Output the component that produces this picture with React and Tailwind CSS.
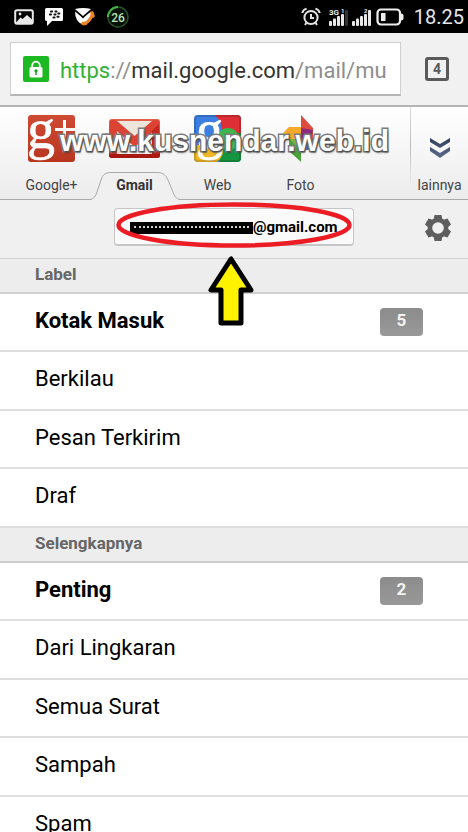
import clsx from "clsx";

const LABELS = [
    { name: "Kotak Masuk", unread: 5 },
    { name: "Berkilau" },
    { name: "Pesan Terkirim" },
    { name: "Draf" },
];

const MORE_LABELS = [
    { name: "Penting", unread: 2 },
    { name: "Dari Lingkaran" },
    { name: "Semua Surat" },
    { name: "Sampah" },
    { name: "Spam" },
];

function PictureIcon() {
    return (
        <svg viewBox="0 0 20 16" className="h-4 w-5">
            <rect x="1.2" y="1.2" width="17.6" height="13.6" rx="1.8" fill="none" stroke="#e8e8e8" strokeWidth="2" />
            <path d="M2 13.5 6.5 8.5 8.5 10 13 6 18 10.5V14H2z" fill="#e8e8e8" />
            <circle cx="6" cy="5" r="1.4" fill="#e8e8e8" />
        </svg>
    );
}

function MessengerIcon() {
    return (
        <svg viewBox="0 0 20 20" className="h-5 w-5">
            <path d="M2.5 1h15Q19 1 19 2.5v10q0 1.500-1.500 1.500H8l-5 5v-5Q1 14 1 12.500v-10Q1 1 2.500 1z" fill="#fff" />
            <g fill="#111">
                <rect x="6" y="3.500" width="3" height="2" rx=".8" />
                <rect x="10.500" y="3.500" width="3" height="2" rx=".8" />
                <rect x="5" y="6.500" width="3" height="2" rx=".8" />
                <rect x="9.500" y="6.500" width="3" height="2" rx=".8" />
                <rect x="13.300" y="5.500" width="3" height="2" rx=".8" />
                <rect x="8.500" y="9.500" width="3" height="2" rx=".8" />
                <rect x="12.500" y="8.800" width="3" height="2" rx=".8" />
            </g>
        </svg>
    );
}

function MailPhoneIcon() {
    return (
        <svg viewBox="0 0 22 20" className="h-5 w-[22px]">
            <path d="M1 2Q9 0 17 2L9 9z" fill="#fff" />
            <path d="M1 4.500 6.500 9 9 11.500 11.500 9 17 4.500V9l-6 7-2 1.500Q1 15 1 4.500z" fill="#fff" />
            <path d="M9 16.500Q15.500 16.500 18.500 7" fill="none" stroke="#ee8420" strokeWidth="2.800" />
            <path d="M9 16.500h2.500M18 6l1 3" stroke="#ee8420" strokeWidth="3.600" strokeLinecap="round" />
        </svg>
    );
}

function BatteryRing() {
    return (
        <svg viewBox="0 0 24 24" className="h-6 w-6">
            <circle cx="12" cy="12" r="10" fill="#081008" stroke="#245428" strokeWidth="1.500" />
            <path d="M2 12A10 10 0 0 1 12 2" fill="none" stroke="#44b244" strokeWidth="2" />
            <text x="12" y="16.500" textAnchor="middle" fontSize="12" fontWeight="500" fill="#b5e6b5" fontFamily="Roboto, sans-serif">
                26
            </text>
        </svg>
    );
}

function AlarmIcon() {
    return (
        <svg viewBox="0 0 20 20" className="h-5 w-5" fill="none" stroke="#e4e4e4" strokeWidth="2">
            <circle cx="10" cy="10.500" r="6.600" />
            <path d="M10 7v4h3M1.200 6Q2.200 2.600 5.600 1.600M18.800 6Q17.800 2.600 14.400 1.600M5.600 15.500 4 18M14.400 15.500 16 18" />
        </svg>
    );
}

function SignalIcon({ network, slot, strong }) {
    return (
        <svg viewBox="0 0 20 20" className="h-5 w-5">
            <g fill="#e8e8e8">
                <rect x="0" y="14" width="3" height="5" rx="1" />
                <rect x="4" y="11.500" width="3" height="7.500" rx="1" />
                <rect x="8" y="9" width="3" height="10" rx="1" />
                <rect x="12" y="7" width="3" height="12" rx="1" />
                <rect x="16" y="3" width="3" height="16" rx="1" fill={strong ? "#e8e8e8" : "#333"} />
            </g>
            <text x="0" y="8" fontSize="8" fontWeight="700" fill="#e8e8e8" fontFamily="Roboto, sans-serif">
                {network}
            </text>
            <text x="12" y="6" fontSize="6" fontWeight="700" fill="#e8e8e8" fontFamily="Roboto, sans-serif">
                {slot}
            </text>
        </svg>
    );
}

function BatteryIcon() {
    return (
        <svg viewBox="0 0 28 18" className="h-[18px] w-7">
            <rect x="1.500" y="1.500" width="22.500" height="15" rx="3.500" fill="none" stroke="#eee" strokeWidth="2.200" />
            <rect x="5" y="5" width="4.500" height="8" fill="#eee" />
            <path d="M25 5.500q2.500 0 2.500 2v3q0 2-2.500 2z" fill="#eee" />
        </svg>
    );
}

function LockBadge() {
    return (
        <svg viewBox="0 0 26 26" className="size-[26px] shrink-0">
            <rect width="26" height="26" rx="2" fill="#1db923" />
            <path d="M9.200 12V9.500a3.800 3.800 0 0 1 7.600 0V12" fill="none" stroke="#fff" strokeWidth="1.800" />
            <rect x="6.500" y="11" width="13" height="10.500" rx="1.500" fill="#fff" />
            <circle cx="13" cy="14.800" r="1.600" fill="#159c1b" />
            <path d="M12.300 15h1.400v4h-1.400z" fill="#159c1b" />
        </svg>
    );
}

function GooglePlusIcon() {
    return (
        <svg viewBox="0 0 48 48" className="size-12">
            <defs>
                <linearGradient id="plusBg" x1="0" y1="0" x2="0" y2="1">
                    <stop offset="0" stopColor="#cf4a33" />
                    <stop offset="1" stopColor="#b83620" />
                </linearGradient>
            </defs>
            <rect width="47" height="47" rx="3" fill="url(#plusBg)" />
            <g fill="#fff">
                <text x="-1" y="33" fontSize="56" fontFamily="Liberation Serif, serif" stroke="#fff" strokeWidth=".6">
                    g
                </text>
                <path d="M35 5h3v8h9v3h-9v8h-3v-8h-8v-3h8z" />
            </g>
        </svg>
    );
}

function GmailIcon() {
    return (
        <svg viewBox="0 0 52 40" className="h-10 w-[52px]">
            <defs>
                <linearGradient id="mailRed" x1="0" y1="0" x2="0" y2="1">
                    <stop offset="0" stopColor="#e8604e" />
                    <stop offset="1" stopColor="#b01d15" />
                </linearGradient>
            </defs>
            <rect x="0" y="0" width="51" height="39" rx="3" fill="url(#mailRed)" />
            <path d="M8 2h35v33H8z" fill="#ece5da" />
            <path d="M8 36 22 20h8L43 36z" fill="#f8f4ec" stroke="#d8cabb" strokeWidth="1" />
            <path d="M1 2Q3 0 8 2L25.500 17 43 2q5-2 7 0v6L25.500 28 8 12v24H1z" fill="#db4435" />
            <path d="M25.500 28 43 12v24h7V5z" fill="#c5281e" />
            <path d="M0 35h51v1q0 3-3 3H3q-3 0-3-3z" fill="#a81912" />
        </svg>
    );
}

function GoogleSearchIcon() {
    return (
        <svg viewBox="0 0 48 48" className="size-12">
            <defs>
                <clipPath id="webClip">
                    <rect x="0" y="0" width="47" height="47" rx="4" />
                </clipPath>
            </defs>
            <g clipPath="url(#webClip)">
                <rect width="48" height="48" fill="#3d7fe0" />
                <path d="M21 0h27v22H28Q30 9 21 0z" fill="#dd2f35" />
                <path d="M48 18H26v30h22z" fill="#169540" />
                <circle cx="34" cy="24" r="11" fill="#3cb54b" />
                <path d="M0 32Q14 24 28 30 32 40 22 48H0z" fill="#f2b826" />
            </g>
            <text x="2" y="33" fontSize="54" fontFamily="Liberation Serif, serif" fill="#fff" stroke="#fff" strokeWidth=".8">
                g
            </text>
            <rect x="1" y="1" width="45" height="45" rx="3" fill="none" stroke="#00000026" strokeWidth="2" />
        </svg>
    );
}

function PhotosIcon() {
    return (
        <svg viewBox="0 0 48 48" className="size-12">
            <path d="M24 0 36 13v11H24z" fill="#dc4b3e" />
            <path d="M24 24H4Q4 19 12 12h12z" fill="#f3a929" />
            <path d="M24 13 36 15 33 24H24z" fill="#8e2a7c" />
            <path d="M24 24H45L36 35H24z" fill="#3c6ddf" />
            <path d="M12 24h12v23L12 36z" fill="#4ba13c" />
            <path d="M24 24h12v11z" fill="#2c49a8" />
            <path d="M12 24h12v11z" fill="#7cb342" />
        </svg>
    );
}

function ChevronsIcon() {
    return (
        <svg viewBox="0 0 22 22" className="size-[22px]">
            <defs>
                <linearGradient id="chevrons" x1="0" y1="0" x2="0" y2="1">
                    <stop offset="0" stopColor="#2f3d5c" />
                    <stop offset="1" stopColor="#5d6c8e" />
                </linearGradient>
            </defs>
            <path d="M1 1 11 7 21 1v4L11 11 1 5zM1 10l10 6 10-6v4l-10 7L1 14z" fill="url(#chevrons)" />
        </svg>
    );
}

function GearIcon() {
    return (
        <svg viewBox="0 0 28 28" className="size-7">
            <g fill="#5e5e5e">
                {[0, 60, 120].map((angle) => (
                    <path key={angle} d="M10.500 1h7l1 5v16l-1 5h-7l-1-5V6z" transform={`rotate(${angle} 14 14)`} />
                ))}
                <circle cx="14" cy="14" r="10.300" />
            </g>
            <circle cx="14" cy="14" r="5.800" fill="#f0f0f0" />
        </svg>
    );
}

function StatusBar() {
    return (
        <header className="flex h-[33px] shrink-0 items-center justify-between bg-black pl-[14px] pr-1">
            <div className="flex items-center gap-[10px]">
                <PictureIcon />
                <MessengerIcon />
                <MailPhoneIcon />
                <BatteryRing />
            </div>
            <div className="flex items-center">
                <AlarmIcon />
                <div className="ml-2 flex gap-[3px]">
                    <SignalIcon network="3G" slot="1" />
                    <SignalIcon slot="2" strong />
                </div>
                <div className="ml-1">
                    <BatteryIcon />
                </div>
                <time className="ml-[10px] text-[20px] leading-8 text-[#e6e6e6]">18.25</time>
            </div>
        </header>
    );
}

function AddressBar() {
    return (
        <div className="flex h-[74px] shrink-0 items-center border-b-2 border-[#b4b4b4] bg-[#f1f1f1] pl-[10px] pr-[19px]">
            <button
                type="button"
                aria-label="Address"
                className="flex h-[54px] min-w-0 flex-1 items-center gap-[11px] overflow-hidden whitespace-nowrap border border-b-2 border-[#cfcfcf] border-b-[#b5b5b5] bg-white pl-3 text-[22px] text-[#8e8e8e]"
            >
                <LockBadge />
                <span className="pt-[3px]">
                    <span className="text-[#31b135]">https</span>://
                    <span className="text-[#333]">mail.google.com</span>/mail/mu
                </span>
            </button>
            <button
                type="button"
                aria-label="Open tabs"
                className="ml-6 flex size-6 items-center justify-center rounded-[3px] border-[3px] border-[#5a5a5a] text-sm font-bold text-[#5a5a5a]"
            >
                4
            </button>
        </div>
    );
}

function AppTab({ label, icon, active }) {
    return (
        <a href="#" className="relative flex w-[83px] flex-col items-center">
            {active && (
                <svg viewBox="0 0 90 28" className="absolute bottom-[-1px] left-1/2 h-7 w-[90px] -translate-x-1/2">
                    <path
                        d="M0 27.500Q5 27 7 20L11 8Q13 .5 20 .5H68Q75 .5 78 8L83 20Q85 27 90 27.500"
                        fill="#f0f0f0"
                        stroke="#aaa"
                    />
                    <path d="M2 27.500h86" stroke="#f0f0f0" strokeWidth="1.500" />
                </svg>
            )}
            <span className="mt-2 flex h-12 items-center justify-center">{icon}</span>
            <span
                className={clsx(
                    "relative mt-3 text-[14px] leading-5",
                    active ? "font-bold text-[#333]" : "text-[#444]",
                )}
            >
                {label}
            </span>
        </a>
    );
}

function AppTabs() {
    return (
        <nav className="relative flex h-[93px] shrink-0 justify-between border-b border-[#aaa] bg-linear-to-b from-white to-[#ececec] pl-[10px]">
            <div className="flex">
                <AppTab label="Google+" icon={<GooglePlusIcon />} />
                <AppTab label="Gmail" icon={<GmailIcon />} active />
                <AppTab label="Web" icon={<GoogleSearchIcon />} />
                <AppTab label="Foto" icon={<PhotosIcon />} />
            </div>
            <div className="flex">
                <span className="h-20 w-px bg-linear-to-b from-[#ddd] via-[#bbb] to-transparent" />
                <a href="#" className="flex w-[57px] flex-col items-center">
                    <span className="mt-2 flex h-12 items-end pb-1">
                        <ChevronsIcon />
                    </span>
                    <span className="mt-3 text-[14px] leading-5 text-[#444]">lainnya</span>
                </a>
            </div>
            <p className="pointer-events-none absolute left-[60px] top-4 whitespace-nowrap font-['Liberation_Sans',sans-serif] text-[30px] font-bold leading-9 text-white [-webkit-text-stroke:3px_#7b7b7b] [paint-order:stroke_fill] [text-shadow:1px_2px_2px_#0006]">
                www.kusnendar.web.id
            </p>
        </nav>
    );
}

function AccountRow() {
    return (
        <div className="grid h-[59px] shrink-0 grid-cols-[1fr_240px_1fr] border-b border-[#cfcfcf] bg-[#f0f0f0] pt-2">
            <div className="relative col-start-2">
                <button
                    type="button"
                    className="flex h-[38px] w-full items-center rounded border border-b-2 border-[#c6c6c6] bg-[#fafafa] pl-[15px] pt-[2px] text-[15px] font-bold text-black"
                >
                    {/* hidden part of the address */}
                    <span className="flex h-3 w-[123px] items-start bg-black px-1 pt-1">
                        <span className="w-full border-t-2 border-dotted border-[#ccc]" />
                    </span>
                    @gmail.com
                </button>
                <svg viewBox="0 0 240 130" className="pointer-events-none absolute -top-2 left-0 z-10 h-[130px] w-60">
                    <ellipse cx="120" cy="25" rx="115.500" ry="20.500" fill="none" stroke="#ec1c24" strokeWidth="4.500" />
                    <path
                        d="M117 59 97 90h10v33h20V90h10z"
                        fill="#fff200"
                        stroke="#000"
                        strokeWidth="5"
                        strokeLinejoin="round"
                    />
                </svg>
            </div>
            <button type="button" aria-label="Settings" className="mr-4 mt-[6px] self-start justify-self-end">
                <GearIcon />
            </button>
        </div>
    );
}

function LabelSection({ title, labels }) {
    return (
        <section>
            <h2 className="h-[35px] border-b-2 border-[#cfcfcf] bg-[#ededed] pl-[35px] text-[17px] font-bold leading-[31px] text-[#666]">
                {title}
            </h2>
            <ul>
                {labels.map(({ name, unread }) => (
                    <li key={name} className="h-[58px] border-b-2 border-[#dfdfdf] even:h-[59px]">
                        <a
                            href="#"
                            className={clsx(
                                "flex h-full items-center justify-between pl-[35px] pr-[45px] text-[22px] text-black",
                                unread && "font-bold",
                            )}
                        >
                            <span className="pb-1">{name}</span>
                            {unread && (
                                <span className="h-7 w-[43px] rounded bg-linear-to-b from-[#8c8c8c] to-[#999] text-center text-[17px] leading-6 text-[#f4f4f4]">
                                    {unread}
                                </span>
                            )}
                        </a>
                    </li>
                ))}
            </ul>
        </section>
    );
}

export default function App() {
    return (
        <div className="flex h-screen flex-col overflow-hidden bg-white font-[Roboto,sans-serif]">
            <StatusBar />
            <AddressBar />
            <AppTabs />
            <AccountRow />
            <main className="min-h-0 flex-1 overflow-y-auto [scrollbar-width:none]">
                <LabelSection title="Label" labels={LABELS} />
                <LabelSection title="Selengkapnya" labels={MORE_LABELS} />
            </main>
        </div>
    );
}
